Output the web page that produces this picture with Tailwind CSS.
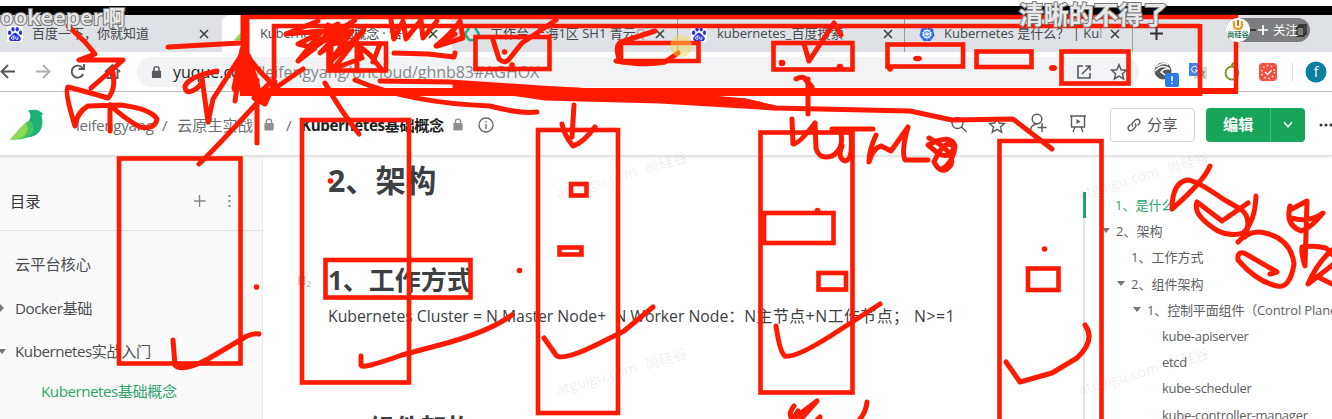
<!DOCTYPE html>
<html lang="zh">
<head>
<meta charset="utf-8">
<title>Kubernetes基础概念</title>
<script src="https://cdn.jsdelivr.net/npm/@tailwindcss/browser@4"></script>
</head>
<body class="relative h-[419px] w-[1332px] overflow-hidden bg-white font-['Open_Sans','Noto_Sans_CJK_SC',sans-serif] text-[#4a4d50]">
<svg class="hidden">
  <symbol id="x" viewBox="0 0 10 10"><path d="M1 1l8 8M9 1L1 9" stroke="#3c4043" stroke-width="1.6" fill="none"/></symbol>
  <symbol id="paw" viewBox="0 0 16 16"><rect width="16" height="16" rx="2" fill="#fff"/><g fill="#2932e1"><ellipse cx="2.6" cy="6.8" rx="1.7" ry="2.2"/><ellipse cx="6" cy="3.2" rx="1.6" ry="2.2"/><ellipse cx="10.2" cy="3.2" rx="1.6" ry="2.2"/><ellipse cx="13.5" cy="6.8" rx="1.6" ry="2.2"/><path d="M8 6.7c1.6 0 2 1.2 3.2 2.4 1.4 1.3 2.9 2 2.6 4-.3 2-2 2.3-3.600 2-1.600-.3-2.800-.3-4.400 0-1.600.3-3.300 0-3.600-2-.3-2 1.200-2.700 2.600-4C6 7.900 6.400 6.700 8 6.700z"/></g><path d="M6.900 9v4.300H5.800a1.300 1.300 0 010-2.600h1M8.700 10.500v1.800q0 1 1 1h1.200v-2.800" stroke="#fff" stroke-width=".9" fill="none"/></symbol>
  <symbol id="bird" viewBox="0 0 34 32"><path d="M18 1.500c5-1.500 10-1 12 1l3 2-1.500 2c2 7 1 15-5 19-4 2.500-8 3-12 3L19 12c2-4 2-7-1-10.500z" fill="#1fb079"/><path d="M20 11C12 15 6 25 0 30.500c9 .5 16 0 21-5 4-4 3-10-1-14.500z" fill="#43c463"/><path d="M16 14C10 18 5 26 0 30.500c7 .3 12-1 15.500-5 3-4 2.500-8 .5-11.500z" fill="#8bdb55"/></symbol>
  <symbol id="lock" viewBox="0 0 12 14"><rect x="1" y="5.500" width="10" height="8" rx="1"/><path d="M3.200 6V4a2.800 2.800 0 015.600 0v2" fill="none" stroke="currentColor" stroke-width="1.500"/></symbol>
  <symbol id="star" viewBox="0 0 18 18"><path d="M9 1.800l2.100 4.900 5.300.5-4 3.500 1.200 5.200L9 13.200l-4.600 2.700 1.200-5.200-4-3.500 5.300-.5z" fill="none" stroke="currentColor" stroke-width="1.500"/></symbol>
</svg>

<div class="h-[6px]"></div>
<div class="h-[9px] bg-black"></div>

<!-- tab strip -->
<div class="flex h-[37px] bg-[#dee1e6] text-[13px] text-[#45484c]">
  <div class="flex w-[222px] items-center pl-[7px]"><svg class="size-4"><use href="#paw"/></svg><span class="ml-[9px] w-[167px] whitespace-nowrap">百度一下，你就知道</span><svg class="size-[10px]"><use href="#x"/></svg></div>
  <div class="flex w-[230px] items-center rounded-t-lg bg-white pl-[12px]"><svg class="h-[15px] w-4"><use href="#bird"/></svg><span class="ml-[10px] w-[168px] overflow-hidden whitespace-nowrap tracking-[-0.2px]">Kubernetes基础概念 · 语<span class="text-gray-300">雀</span></span><svg class="size-[10px]"><use href="#x"/></svg></div>
  <div class="flex w-[226px] items-center rounded-tl-lg border-r border-[#9a9da1] pl-[12px]"><svg class="h-4 w-4" viewBox="0 0 16 16"><path d="M5 2L1 8l4 6M11 14l4-6-4-6M5 14h5" fill="none" stroke="#19b38a" stroke-width="2.500"/></svg><span class="ml-[10px] w-[165px] overflow-hidden whitespace-nowrap">工作台 上海1区 SH1 青云<span class="text-gray-400">Q</span></span><svg class="size-[10px]"><use href="#x"/></svg></div>
  <div class="flex w-[227px] items-center border-r border-[#9a9da1] pl-[13px]"><svg class="size-4"><use href="#paw"/></svg><span class="ml-[10px] w-[166px] whitespace-nowrap">kubernetes_百度搜索</span><svg class="size-[10px]"><use href="#x"/></svg></div>
  <div class="flex w-[228px] items-center border-r border-[#9a9da1] pl-[14px]"><svg class="size-4" viewBox="0 0 16 16"><path d="M8 0l6 3 1.500 6.500L11.500 15h-7L.5 9.500 2 3z" fill="#326ce5"/><g fill="none" stroke="#fff"><circle cx="8" cy="8" r="3.700" stroke-width="1.100"/><path d="M8 2.500v11M2.800 6.500l10.400 3M13.200 6.500l-10.400 3M5 12.500l6-9M5 3.500l6 9" stroke-width=".7"/></g></svg><span class="ml-[9px] w-[166px] overflow-hidden whitespace-nowrap">Kubernetes 是什么？ | Ku<span class="text-gray-400">l</span></span><svg class="size-[10px]"><use href="#x"/></svg></div>
  <div class="flex flex-1 items-center pl-[17px]"><svg class="size-[13px]" viewBox="0 0 13 13"><path d="M6.500 0v13M0 6.500h13" stroke="#333" stroke-width="2"/></svg></div>
</div>

<!-- address bar -->
<div class="flex h-[40px] items-center border-b border-[#bfc1c4] bg-white">
  <svg class="h-10 w-[137px] shrink-0" viewBox="0 0 137 40" fill="none" stroke="#55585c" stroke-width="1.900"><path d="M15 19.500H2M8 13l-6.500 6.500L8 26"/><path d="M36 19.500h13M43 13l6.500 6.500L43 26" stroke="#aeb0b3"/><path d="M82.500 16a6 6 0 10.700 6M84 12v5h-5.500"/><path d="M105 20l7.500-7 7.500 7M107.500 19v7h3.500v-5h3v5h3.500v-7"/></svg>
  <div class="flex h-[30px] w-[1002px] items-center rounded-full bg-[#f1f3f4] pl-[14px] pr-[11px]"><svg class="h-[14px] w-[11px] fill-[#55585c] text-[#55585c]"><use href="#lock"/></svg><span class="ml-[11px] flex-1 text-[16px] tracking-[-0.040px] text-[#85898d]"><span class="text-[#222529]">yuque.com</span>/leifengyang/oncloud/ghnb83#AGHOX</span>
    <svg class="size-4" viewBox="0 0 16 16" fill="none" stroke="#55585c" stroke-width="1.600"><path d="M7 2H2v12h12V9M9.500 2H14v4.500M14 2L6 10"/></svg><svg class="ml-[18px] size-[18px] text-[#55585c]"><use href="#star"/></svg></div>
  <svg class="ml-[15px] h-10 w-[178px] shrink-0" viewBox="1154 0 178 40"><circle cx="1163" cy="19" r="8.500" fill="#54585b"/><path d="M1155 19q7-8 15-2-6-1-9 3l7 5M1156 15q8-6 12-2" stroke="#fff" stroke-width="1.500" fill="none"/><rect x="1165" y="21" width="14" height="14" rx="2" fill="#2c7be9"/><path d="M1172 24v5m0 1.500v1.500" stroke="#fff" stroke-width="1.500"/><rect x="1194" y="15" width="13" height="12" fill="#d4d8dc"/><path d="M1199 20h6m-3-2v2m2 0q-1 4-4 5m0-4q2 3 5 4" stroke="#777" fill="none"/><rect x="1189" y="11" width="11" height="13" fill="#4584ef"/><path d="M1197 15.500a3 3 0 10.500 2.500h-2.500" stroke="#fff" fill="none"/><circle cx="1232" cy="21" r="6.500" fill="none" stroke="#739b24" stroke-width="1.900"/><path d="M1232 14q0-3 3-3" stroke="#739b24" stroke-width="2" fill="none"/><rect x="1259" y="11" width="18" height="18" rx="4" fill="#f44f43"/><circle cx="1268" cy="20" r="6.500" fill="none" stroke="#fff" stroke-width="1.500" stroke-dasharray="1.500 2.600"/><path d="M1265 20l2.500 2.500 4-4" fill="none" stroke="#fff" stroke-width="1.500"/><path d="M1292.500 11v18" stroke="#dadce0"/><circle cx="1316" cy="20" r="10.500" fill="#0a7f9f"/><text x="1316" y="25" text-anchor="middle" font-size="14" fill="#fff">f</text></svg>
</div>

<!-- document header -->
<div class="relative flex h-[64px] items-center border-b border-[#e4e4e4] bg-white pl-[10px] pt-[2px] text-[15.200px] shadow-sm">
  <svg class="h-[32px] w-[34px] shrink-0"><use href="#bird"/></svg>
  <div class="ml-[32px] flex w-[420px] shrink-0 items-center whitespace-nowrap pt-px text-[#6c6f72]"><span class="w-[86px] tracking-[-0.300px]">leifengyang</span><span class="w-[15px]">/</span><span class="w-[86px]">云原生实战</span><svg class="h-[13px] w-[12px] fill-[#8d8f91] text-[#8d8f91]"><use href="#lock"/></svg><span class="ml-[11px] w-[15px]">/</span><b class="w-[151px] tracking-[-0.400px] text-[#222]">Kubernetes基础概念</b><svg class="h-[13px] w-[12px] fill-[#8d8f91] text-[#8d8f91]"><use href="#lock"/></svg><svg class="ml-[14px] size-4 shrink-0" viewBox="0 0 16 16" fill="none" stroke="#666"><circle cx="8" cy="8" r="7" stroke-width="1.300"/><path d="M8 7v5M8 4v1.500" stroke-width="1.300"/></svg></div>
  <svg class="ml-[453px] h-10 w-[144px] shrink-0" viewBox="948 0 144 40" fill="none" stroke="#585a5c" stroke-width="1.400"><circle cx="956.500" cy="18" r="5.500"/><path d="M960.500 22l5 5"/><path d="M996 13l2.200 5 5.300.5-4 3.500 1.200 5.200-4.700-2.800-4.700 2.800 1.200-5.200-4-3.500 5.300-.5z"/><circle cx="1036" cy="14" r="4.800"/><path d="M1029.500 26q0-6 6-7M1041 18v9M1036.500 22.500h9"/><path d="M1069 11h16M1070.500 11v11h13V11M1074 22l-2 5M1080 22l2 5"/><path d="M1075.500 14v5l4-2.500z" fill="#585a5c" stroke="none"/></svg>
  <div class="ml-[17px] flex h-[34px] w-[85px] shrink-0 items-center gap-[6px] rounded border border-[#d5d5d5] pl-[16px] text-[#555]"><svg class="size-[14px]" viewBox="0 0 14 14" fill="none" stroke="#555" stroke-width="1.300"><path d="M6 8.500Q4 6.500 6 4.500l2.500-2.500q2-1.500 3.700 0 1.500 2 0 3.700L10.500 7.500M8 5.500q2 2 0 4L5.500 12q-2 1.500-3.700 0-1.500-2 0-3.700L3.500 6.500"/></svg>分享</div>
  <div class="ml-[11px] flex h-[34px] w-[99px] shrink-0 items-center rounded bg-[#18a45b] text-white"><b class="w-[64px] pl-[17px]">编辑</b><span class="flex h-full flex-1 items-center justify-center border-l border-[#4abb80]"><svg class="h-2 w-[10px]" viewBox="0 0 10 8"><path d="M1 1l4 5 4-5" fill="none" stroke="#fff" stroke-width="1.300"/></svg></span></div>
  <svg class="ml-[14px] h-3 w-[13px] shrink-0" viewBox="0 0 13 12" fill="#333"><circle cx="2" cy="6" r="1.500"/><circle cx="7" cy="6" r="1.500"/><circle cx="12" cy="6" r="1.500"/></svg>
</div>

<div class="flex h-[263px]">
  <!-- table of contents -->
  <aside class="w-[263px] shrink-0 overflow-hidden border-r border-[#ececec] bg-[#fafafa] text-[15.200px]">
    <div class="flex h-[75px] items-center border-b border-[#e2e2e2] pb-0 pl-[10px] pt-[16px] text-[#333]"><span class="w-[184px]">目录</span><svg class="h-4 w-[50px]" viewBox="0 0 50 16" stroke="#888"><path d="M5.500 2v12M-.5 8h12" stroke-width="1.400"/><path d="M35.500 2v2m0 3v2m0 3v2" stroke-width="2"/></svg></div>
    <div class="mt-[12px] flex h-[43px] items-center pl-[15px]">云平台核心</div>
    <div class="flex h-[44px] items-center"><svg class="h-2 w-[15px]" viewBox="0 0 15 8"><path d="M0 0l4 4-4 4z" fill="#777"/></svg><span class="tracking-[-0.450px]">Docker基础</span></div>
    <div class="flex h-[43px] items-center"><svg class="h-2 w-[15px]" viewBox="0 0 15 8"><path d="M-2 1h8L2 6z" fill="#777"/></svg><span class="tracking-[-0.480px]">Kubernetes实战入门</span></div>
    <div class="flex h-[36px] items-center pl-[41px] tracking-[-0.480px] text-[#2fa569]">Kubernetes基础概念</div>
  </aside>
  <!-- document text -->
  <main class="w-[820px] shrink-0 overflow-hidden pl-[34px] text-[#3d4043]">
    <h1 class="flex h-[50px] items-center pl-[31px] text-[30.300px] font-bold">2、架构</h1>
    <h2 class="mt-[55px] flex h-[39px] items-center text-[26px] font-bold"><span class="w-[31px] text-[13px] font-normal text-[#b5b5b5]">H₂</span>1、工作方式</h2>
    <p class="flex h-[32px] items-center whitespace-pre pl-[31px] pt-[2px] text-[15.800px]"><span class="tracking-[-0.020px]">Kubernetes Cluster = N Master Node+  N Worker Node：</span><span class="tracking-[0.550px]">N主节点+N工作节点； N>=1</span></p>
    <h2 class="mt-[76px] flex h-[40px] items-center pl-[31px] text-[26px] font-bold">2、组件架构</h2>
  </main>
  <!-- outline -->
  <nav class="flex-1 overflow-hidden whitespace-nowrap pt-[36px] text-[13px] leading-[26.200px] text-[#5d6063]">
    <div class="relative h-[400px] border-l-2 border-[#e4e4e4]">
      <div class="absolute left-[-2px] top-0 h-[26px] w-[3px] bg-[#25a566]"></div>
      <div class="pl-[30px] text-[#25a566]">1、是什么</div>
      <div class="flex items-center pl-[17px]"><svg class="h-2 w-[14px] shrink-0" viewBox="0 0 14 8"><path d="M0 1h8L4 6z" fill="#777"/></svg>2、架构</div>
      <div class="pl-[46px]">1、工作方式</div>
      <div class="flex items-center pl-[32px]"><svg class="h-2 w-[14px] shrink-0" viewBox="0 0 14 8"><path d="M0 1h8L4 6z" fill="#777"/></svg>2、组件架构</div>
      <div class="flex items-center pl-[48px]"><svg class="h-2 w-[14px] shrink-0" viewBox="0 0 14 8"><path d="M0 1h8L4 6z" fill="#777"/></svg><span class="tracking-[-0.150px]">1、控制平面组件（Control Plane</span></div>
      <div class="pl-[77px] tracking-[-0.300px]">kube-apiserver</div>
      <div class="pl-[77px] tracking-[-0.300px]">etcd</div>
      <div class="pl-[77px] tracking-[-0.300px]">kube-scheduler</div>
      <div class="pl-[77px] tracking-[-0.250px]">kube-controller-manager</div>
    </div>
  </nav>
</div>

<!-- watermarks, pen marks and floating captions -->
<svg class="pointer-events-none absolute inset-0 h-[419px] w-[1332px]" viewBox="0 0 1332 419" fill="none">
  <g fill="#000" fill-opacity=".08" font-size="14.500">
    <g transform="translate(558 199) rotate(-16)"><text>atguigu.com</text><text x="92">尚硅谷</text></g>
    <g transform="translate(558 395) rotate(-16)"><text>atguigu.com</text><text x="92">尚硅谷</text></g>
    <g transform="translate(1080 199) rotate(-16)"><text>atguigu.com</text><text x="92">尚硅谷</text></g>
    <g transform="translate(1080 395) rotate(-16)"><text>atguigu.com</text><text x="92">尚硅谷</text></g>
  </g>
  <g stroke="#ff1a00" stroke-width="4.600">
    <path d="M243 17H1236V91M272 26H1200" stroke-width="4.500"/>
    <path d="M240 91H1238" stroke-width="6"/><path d="M240 92H1202" stroke-width="8"/><path d="M245 15v79" stroke-width="9"/><path d="M274 24v70M1200 24v72"/>
    <rect x="119" y="158.500" width="121.500" height="205"/>
    <rect x="302" y="120" width="107" height="262.500"/>
    <rect x="538" y="130" width="80" height="283"/>
    <rect x="760.500" y="132.500" width="92" height="260"/>
    <path d="M999.500 424V141H1101.500V424"/>
    <rect x="325.500" y="260" width="145" height="37.500"/>
    <rect x="571" y="184" width="15.500" height="11.500"/><rect x="559.500" y="247.500" width="22" height="7"/>
    <rect x="764" y="213" width="69.500" height="30"/><rect x="818.500" y="273" width="27.500" height="16.500"/>
    <rect x="1028" y="268.500" width="30.500" height="21.500"/>
    <rect x="475.500" y="37" width="74" height="32"/><rect x="773.500" y="43" width="79" height="26.500"/>
    <rect x="887.500" y="44.500" width="75.500" height="22"/><rect x="976.500" y="51.500" width="55" height="15.500"/>
    <rect x="1061.500" y="51.500" width="67" height="32"/><rect x="328.500" y="43.500" width="57.500" height="27"/>
    <path d="M621 43H698.500V61H621z"/>
  </g>
  <g stroke="#ff1a00" stroke-width="5" stroke-linecap="round" stroke-linejoin="round">
    <path d="M68 26L85 42L95 54L79 60H123Q113 69 91 88M112 69Q117 88 108 98Q91 93 68 87Q64 91 75 126Q77 112 88 106L121 105Q151 109 157 119Q155 130 140 127Q125 119 110 105V131"/>
    <path d="M168 47L240 43M217 71Q190 76 185 86Q185 94 192 91Q203 86 202 78L208 122L213 99L242 54L235 101M244 52Q263 76 271 82L254 98L265 104L275 82M257 80V143M303 69Q270 91 257 103Q215 149 199 164"/>
    <path d="M244 50L236 88M247 57L257 92M239 72L253 91L260 98" stroke-width="9"/>
    <path d="M286 34L318 21L286 34L322 31L298 61L315 48L298 44L338 24L312 49L347 25L320 53L352 31L330 62L364 30L333 69L362 58L357 44L370 55L382 70M328 25L342 36L350 23M355 20L334 37M331 44V69M357 44V71M380 44L373 62"/>
    <path d="M391 20L394 39L403 21L406 39L421 20L423 38L437 21M436 46Q455 30 460 21L463 38L437 46M442 41L455 34M394 53L428 54L454 57L455 53M325 83Q340 110 359 134"/>
    <path d="M355 80Q410 103 490 106Q520 114 537 112M380 81L450 82L540 88L660 95L745 101L775 108L910 111L952 120L1013 119L1052 149"/>
    <path d="M455 85L545 89Q660 93 745 101L775 108L660 101L545 98Q500 91 455 87z" fill="#ff1a00"/>
    <path d="M493 40L499 59Q505 65 510 58L522 43L556 20M620 61Q614 46 621 42L655 31M616 61Q645 66 665 62L678 53M804 44L809 61L834 23L841 35"/>
    <path d="M574 105L572 137M562 124Q564 135 573 146Q583 143 595 127M796 79Q806 74 808 84M808 79V114M805 79L812 87"/>
    <path d="M792 119L793 144Q798 145 815 123L816 148Q819 160 832 156Q844 149 841 134M842 146Q837 158 845 161Q853 160 851 133M832 129H873M876 135Q869 150 869 162Q873 148 881 146L891 151L908 127Q901 151 905 160H928M929 138Q956 152 951 165Q942 177 934 162Q945 137 954 147Q950 159 939 154L928 145Q951 133 955 146Q953 163 942 169"/>
    <path d="M173 340L175 365Q181 373 208 359L247 336Q254 333 259 334M361 356V365Q360 370 402 355L447 343Q490 331 512 315M544 338L556 355Q561 362 596 345L624 331L653 307M776 326Q780 353 785 356Q796 358 832 335L880 304M1006 362L1020 382L1052 373L1077 358Q1096 340 1085 325"/>
    <path d="M794 406Q787 415 793 419L817 401L801 419M798 411L790 424M820 417L815 422M867 402Q866 412 860 419"/>
    <path d="M1210 166Q1204 181 1172 209Q1172 183 1187 180Q1196 180 1223 199L1242 210Q1252 219 1245 237M1197 202Q1192 215 1218 231Q1231 237 1243 233Q1255 222 1256 196M1197 202L1222 221L1248 203M1238 242Q1251 229 1265 233Q1291 239 1294 264Q1290 289 1277 286Q1257 282 1238 260Q1237 250 1246 254L1277 272L1270 274"/>
    <path d="M1290 206Q1285 225 1301 231Q1310 229 1323 213Q1310 223 1291 218M1290 210L1307 201L1305 266M1302 248Q1301 254 1305 266M1302 247Q1315 245 1326 248L1334 256M1332 250Q1317 263 1308 284Q1321 274 1335 263M1314 275L1334 285"/>
  </g>
  <g fill="#ff1a00"><circle cx="256.500" cy="287" r="2.800"/><circle cx="330.500" cy="181" r="2.800"/><circle cx="519.500" cy="270.500" r="2.800"/><circle cx="1044.500" cy="249" r="2.800"/><circle cx="504.500" cy="52" r="2.800"/><circle cx="512" cy="65" r="2.800"/><circle cx="782" cy="63" r="3.300"/><circle cx="840" cy="67" r="3.300"/><ellipse cx="917.500" cy="58.500" rx="4.500" ry="2.800"/><circle cx="890" cy="69" r="2.800"/><ellipse cx="1053" cy="68" rx="4" ry="3"/><circle cx="817.500" cy="210.500" r="2.800"/></g>
  <circle cx="681" cy="46" r="11" fill="#f5dc55" fill-opacity=".5"/>

  <g font-weight="600" fill="#e8e8e8" stroke="#777" stroke-width="2" paint-order="stroke">
    <text x="0" y="25" textLength="125" lengthAdjust="spacingAndGlyphs" font-size="21">ookeeper啊</text>
    <text x="1019" y="24" textLength="149" lengthAdjust="spacingAndGlyphs" font-size="25">清晰的不得了</text>
  </g>
  <rect x="1226" y="18" width="84" height="24" rx="12" fill="#666" fill-opacity=".82"/>
  <path d="M1297 27h7v9h-7zM1299 27v-2h7v9h-2" stroke="#222" stroke-width="1.300"/>
  <path d="M1250 30h6" stroke="#222" stroke-width="1.500"/>
  <circle cx="1238" cy="30" r="12" fill="#fff"/>
  <path d="M1234 21v4q0 4 4 4t4-4v-4" stroke="#e3a22b" stroke-width="2.400"/><path d="M1238 20v6" stroke="#d66c20" stroke-width="2"/>
  <text x="1238" y="37" text-anchor="middle" font-size="7.200" font-weight="700" fill="#187451">尚硅谷</text>
  <path d="M1263 25v10M1258 30h10" stroke="#fff" stroke-width="1.700"/>
  <text x="1273" y="34.500" font-size="12.500" fill="#fff">关注</text>
</svg>
</body>
</html>
